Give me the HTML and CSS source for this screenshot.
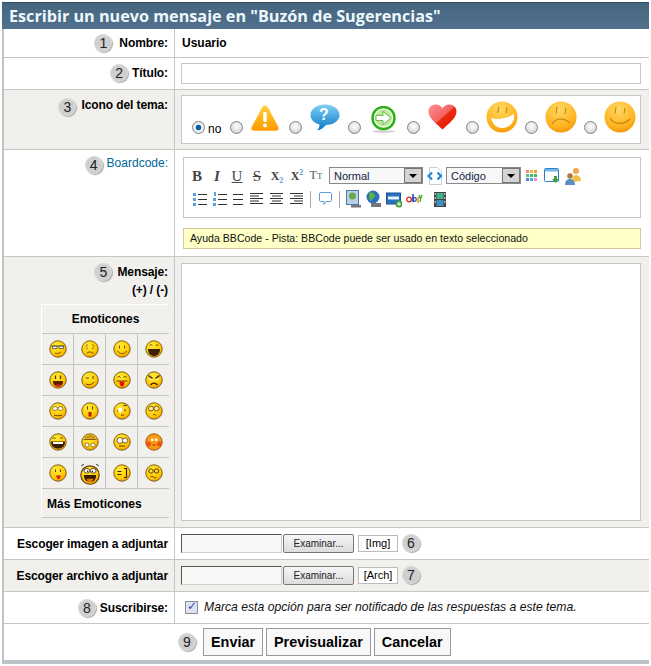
FILE: index.html
```html
<!DOCTYPE html>
<html lang="es">
<head>
<meta charset="utf-8">
<title>Escribir un nuevo mensaje</title>
<link rel="stylesheet" href="styles.css">
</head>
<body>
<svg class="defs" width="0" height="0" aria-hidden="true">
  <defs>
    <radialGradient id="gY" cx="40%" cy="30%" r="75%"><stop offset="0" stop-color="#ffec3a"/><stop offset="0.7" stop-color="#ffc800"/><stop offset="1" stop-color="#e89000"/></radialGradient>
    <radialGradient id="gO" cx="45%" cy="25%" r="85%"><stop offset="0" stop-color="#ffd864"/><stop offset="0.65" stop-color="#ffb420"/><stop offset="1" stop-color="#f08c00"/></radialGradient>
    <linearGradient id="gW" x1="0" y1="0" x2="0" y2="1"><stop offset="0" stop-color="#ffd23a"/><stop offset="1" stop-color="#ff9900"/></linearGradient>
    <linearGradient id="gB" x1="0" y1="0" x2="0" y2="1"><stop offset="0" stop-color="#7fd0f4"/><stop offset="1" stop-color="#0a78c8"/></linearGradient>
    <linearGradient id="gH" x1="0" y1="0" x2="1" y2="1"><stop offset="0" stop-color="#ff8f8f"/><stop offset="0.5" stop-color="#f46060"/><stop offset="0.52" stop-color="#ee2a10"/><stop offset="1" stop-color="#e01000"/></linearGradient>
    <symbol id="f" viewBox="0 0 18 18"><circle cx="9" cy="9" r="8.2" fill="url(#gY)" stroke="#80601a" stroke-width="1"/></symbol>
    <symbol id="b" viewBox="0 0 32 32"><circle cx="16" cy="16" r="15.5" fill="url(#gO)"/></symbol>
  </defs>
</svg>

<form class="post">
  <h2 class="title">Escribir un nuevo mensaje en "Buzón de Sugerencias"</h2>

  <div class="row r1">
    <div class="lab"><span class="num">1</span><b>Nombre:</b></div>
    <div class="val"><b class="user">Usuario</b></div>
  </div>

  <div class="row r2">
    <div class="lab"><span class="num">2</span><b>Título:</b></div>
    <div class="val"><input class="text" type="text"></div>
  </div>

  <div class="row r3 alt">
    <div class="lab"><span class="num">3</span><b>Icono del tema:</b></div>
    <div class="val">
      <div class="icons">
        <label class="opt first"><input class="radio" type="radio" name="i" checked><span class="no">no</span></label>
        <label class="opt"><input class="radio" type="radio" name="i">
          <svg class="ti warn" width="30" height="28" viewBox="0 0 30 28"><path d="M15 1.5c1.500 0 2.500 1 3.300 2.500l10 19c1 2-.3 3.800-2.300 3.800H4C2 26.800.7 25 1.700 23l10-19C12.500 2.500 13.500 1.500 15 1.500z" fill="url(#gW)"/><rect x="13.300" y="8" width="3.400" height="10" rx="1.200" fill="#fff"/><circle cx="15" cy="21.500" r="2" fill="#fff"/></svg></label>
        <label class="opt"><input class="radio" type="radio" name="i">
          <svg class="ti quest" width="30" height="27" viewBox="0 0 30 27"><path d="M15 .5c8 0 14.500 4.500 14.500 10.500S23 21 16 21c-2 2.500-5 5-9 5.500 1.500-1.500 2.500-3.500 2.500-6C4 19 .5 15.500.5 11 .5 5 7 .5 15 .5z" fill="url(#gB)"/><text class="q" x="14" y="16" text-anchor="middle">?</text></svg></label>
        <label class="opt"><input class="radio" type="radio" name="i">
          <svg class="ti go" width="25" height="27" viewBox="0 0 25 27"><ellipse cx="12.500" cy="25.500" rx="11.500" ry="1.200" fill="#ccc"/><circle cx="12.500" cy="12" r="11" fill="#fff" stroke="#2cb014" stroke-width="2.500"/><circle cx="12.500" cy="12" r="8.500" fill="#b8ec90"/><path d="M5 9.500h7V5.500l8 6.500-8 6.500v-4H5z" fill="#fff" stroke="#5aa838" stroke-width=".8"/></svg></label>
        <label class="opt"><input class="radio" type="radio" name="i">
          <svg class="ti heart" width="29" height="26" viewBox="0 0 29 26"><path d="M14.500 25.500C9 20 .5 14.500.5 7.500.5 3.500 3.500.5 7.500.5c3 0 5.500 1.500 7 4 1.500-2.500 4-4 7-4 4 0 7 3 7 7 0 7-8.500 12.500-14 18z" fill="url(#gH)"/></svg></label>
        <label class="opt"><input class="radio" type="radio" name="i">
          <svg class="ti big" width="32" height="32" viewBox="0 0 32 32"><use href="#b"/><path d="M5 17c7 2 15 1 23-4 1 8-4 14-12 14-6 0-9-4-11-10z" fill="#fff"/><path d="M13 6l-1.500 6M21 6l-1 6" stroke="#c98008" stroke-width="1.100"/></svg></label>
        <label class="opt"><input class="radio" type="radio" name="i">
          <svg class="ti big" width="32" height="32" viewBox="0 0 32 32"><use href="#b"/><path d="M12 6l-1 6.500M21 7l-1 6M7 23c4-6 11-7 18-1" fill="none" stroke="#c98008" stroke-width="1.100"/></svg></label>
        <label class="opt"><input class="radio" type="radio" name="i">
          <svg class="ti big" width="32" height="32" viewBox="0 0 32 32"><use href="#b"/><path d="M12 6l-1 6.500M21 7l-1 6M6 17c4 7 14 7 20 1" fill="none" stroke="#c98008" stroke-width="1.100"/></svg></label>
      </div>
    </div>
  </div>

  <div class="row r4">
    <div class="lab"><span class="num">4</span><a class="link" href="#">Boardcode:</a></div>
    <div class="val editor">
      <div class="tools">
        <div class="tbar">
          <span class="g gb">B</span><span class="g gi">I</span><span class="g gu">U</span><span class="g gs">S</span><span class="g gx">X<sub>2</sub></span><span class="g gx">X<sup>2</sup></span><span class="g gt">T<small>T</small></span>
          <span class="sel s1"><span>Normal</span><i class="arrow"></i></span>
          <svg class="ic code" width="16" height="18" viewBox="0 0 16 18"><path d="M2.500.5h8l4 4v13h-12z" fill="#fff" stroke="#ccd"/><path d="M5 5.500L1.500 9 5 12.500M10.500 5.500L14 9l-3.500 3.500" fill="none" stroke="#1e88d8" stroke-width="2.200"/></svg>
          <span class="sel s2"><span>Código</span><i class="arrow"></i></span>
          <svg class="ic pal" width="12" height="12" viewBox="0 0 12 12"><path fill="#f48a70" d="M0 0h3v3H0z"/><path fill="#f4b840" d="M4 0h3v3H4z"/><path fill="#f0a040" d="M8 0h3v3H8z"/><path fill="#70c070" d="M0 4h3v3H0z"/><path fill="#30c080" d="M4 4h3v3H4z"/><path fill="#50b050" d="M8 4h3v3H8z"/><path fill="#5080e0" d="M0 8h3v3H0z"/><path fill="#40b0e0" d="M4 8h3v3H4z"/><path fill="#f090d0" d="M8 8h3v3H8z"/></svg>
          <svg class="ic win" width="16" height="16" viewBox="0 0 16 16"><rect x=".5" y=".5" width="14" height="13" rx="1" fill="#fff" stroke="#2f7fc8"/><path d="M1 1h13v2.500H1z" fill="#7ab4e8"/><path d="M10 8h3v3h2l-3.500 4L8 11h2z" fill="#3fa03a"/></svg>
          <svg class="ic usr" width="18" height="18" viewBox="0 0 18 18"><circle cx="12" cy="4" r="3" fill="#f0a850"/><path d="M8 15c0-5 2-7 4-7s5 2 5 6z" fill="#f2c040"/><circle cx="6" cy="9" r="2.800" fill="#b07840"/><path d="M1 18c0-4 2-6 5-6s5 2 5 6z" fill="#5a90c0"/></svg>
        </div>
        <div class="tbar b2">
          <svg class="ic" width="14" height="14" viewBox="0 0 14 14"><path d="M0 1h3v3H0zM0 6h3v3H0zM0 11h3v3H0z" fill="#5aa0e0"/><path d="M5 2.500h9M5 7.500h9M5 12.500h9" stroke="#333"/></svg>
          <svg class="ic" width="14" height="14" viewBox="0 0 14 14"><path d="M1 0h2v4H1zM0 6h3v3H0zM0 11h3v3H0z" fill="#5aa0e0"/><path d="M5 2.500h9M5 7.500h9M5 12.500h9" stroke="#333"/></svg>
          <svg class="ic l3" width="14" height="14" viewBox="0 0 14 14"><path d="M0 2.500h10M0 7.500h10M0 12.500h10" stroke="#333"/></svg>
          <svg class="ic al" width="13" height="14" viewBox="0 0 13 14"><path d="M0 1.500h13M0 4h9M0 6.500h13M0 9h9M0 11.500h13" stroke="#333"/></svg>
          <svg class="ic al" width="13" height="14" viewBox="0 0 13 14"><path d="M0 1.500h13M2 4h9M0 6.500h13M2 9h9M0 11.500h13" stroke="#333"/></svg>
          <svg class="ic al" width="13" height="14" viewBox="0 0 13 14"><path d="M0 1.500h13M4 4h9M0 6.500h13M4 9h9M0 11.500h13" stroke="#333"/></svg>
          <span class="sep"></span>
          <svg class="ic bub" width="13" height="14" viewBox="0 0 13 14"><path d="M2 .5h9c1 0 1.500.5 1.500 1.500v6c0 1-.5 1.500-1.500 1.500H7l-2 3v-3H2C1 9.500.5 9 .5 8V2C.5 1 1 .5 2 .5z" fill="#fff" stroke="#5a9cd8"/></svg>
          <span class="sep s-b"></span>
          <svg class="ic pic" width="16" height="18" viewBox="0 0 16 18"><rect x=".5" y=".5" width="12" height="14" fill="#b8d0e8" stroke="#4a78a8"/><circle cx="6.500" cy="6" r="3.500" fill="#6aa84a"/><path d="M5 15h10v2.500H5z" fill="#777"/></svg>
          <svg class="ic pic" width="16" height="18" viewBox="0 0 16 18"><circle cx="7" cy="7" r="6.500" fill="#2a70c0"/><path d="M3 3c3-2 5 0 6 2s-2 3-3 5-3 0-3-3z" fill="#5ab040"/><path d="M5 13h10v4H5z" fill="#777"/></svg>
          <svg class="ic pic" width="16" height="18" viewBox="0 0 16 18"><rect x=".5" y="3" width="14" height="11" fill="#2a70c0" stroke="#1a50a0"/><path d="M2 6.500h11v3H2z" fill="#e8f0f8"/><circle cx="13" cy="14" r="3.500" fill="#3fa03a"/><path d="M11 14h4M13 12v4" stroke="#fff"/></svg>
          <svg class="ic pic ebay" width="17" height="12" viewBox="0 0 17 12"><circle cx="3" cy="6.500" r="2.300" fill="none" stroke="#e02020" stroke-width="1.300"/><path d="M7 1v8" stroke="#1a40c0" stroke-width="1.500"/><circle cx="8.500" cy="6.500" r="1.800" fill="none" stroke="#1a40c0" stroke-width="1.200"/><path d="M12 4l0 6" stroke="#e8a000" stroke-width="1.500"/><path d="M13 2l1.500 4L16 2M14.500 6L14 9" fill="none" stroke="#40a020" stroke-width="1.300"/></svg>
          <svg class="ic film" width="12" height="15" viewBox="0 0 12 15"><rect width="12" height="15" fill="#444"/><rect x="2.500" y="1" width="7" height="6" fill="#3fb088"/><rect x="2.500" y="8" width="7" height="6" fill="#3f90c0"/><path d="M.7 1h1v2h-1zM.7 5h1v2h-1zM.7 9h1v2h-1zM10.300 1h1v2h-1zM10.300 5h1v2h-1zM10.300 9h1v2h-1z" fill="#ddd"/></svg>
        </div>
      </div>
      <div class="help">Ayuda BBCode - Pista: BBCode puede ser usado en texto seleccionado</div>
    </div>
  </div>

  <div class="row r5 alt">
    <div class="lab stack">
      <div class="lab-top"><span class="num">5</span><b>Mensaje:</b></div>
      <div class="size"><b>(+) / (-)</b></div>
      <div class="emos">
        <div class="emo-head">Emoticones</div>
        <span class="c"><svg class="e" viewBox="0 0 18 18"><use href="#f"/><path d="M2.500 6h13M3.500 6h4.500v2.500h-4.500zM10 6h4.500v2.500H10z" fill="#fff" stroke="#333" stroke-width=".7"/><path d="M6 13c2 1 4 .5 6-1" fill="none" stroke="#7a5000"/></svg></span>
        <span class="c"><svg class="e" viewBox="0 0 18 18"><use href="#f"/><path d="M6.500 4.500L5 6.500M11.500 4.500L13 6.500M6 7.500v1.500M12 7.500v1.500M5.500 13.500c2-2 5-2 7 0" fill="none" stroke="#7a5000"/></svg></span>
        <span class="c"><svg class="e" viewBox="0 0 18 18"><use href="#f"/><path d="M6.500 5.500v3M11.500 5.500v3M4.500 11c2 3.500 7 3.500 9 0" fill="none" stroke="#7a5000"/></svg></span>
        <span class="c"><svg class="e" viewBox="0 0 18 18"><use href="#f"/><path d="M4.500 5.500c1-1 2-1 3 0M10.500 5.500c1-1 2-1 3 0" fill="none" stroke="#7a5000"/><path d="M3 9h12c0 5-3 7-6 7s-6-2-6-7z" fill="#3a2000"/></svg></span>

        <span class="c"><svg class="e" viewBox="0 0 18 18"><use href="#f"/><path d="M6.500 4.500v3.500M11.500 4.500v3.500" stroke="#5a3a00" stroke-width="1.300"/><path d="M4 10h10c0 4-2 5.500-5 5.500S4 14 4 10z" fill="#5a2000"/><path d="M6.500 13.500h5v2h-5z" fill="#e02020"/></svg></span>
        <span class="c"><svg class="e" viewBox="0 0 18 18"><use href="#f"/><path d="M5 7h3M12 5v3M5 13c3 1.500 6 .5 8-2" fill="none" stroke="#5a3a00"/></svg></span>
        <span class="c"><svg class="e" viewBox="0 0 18 18"><use href="#f"/><path d="M4.500 6.500c1-1.500 2-1.500 3 0M10.500 6.500c1-1.500 2-1.500 3 0M3.500 10h11" fill="none" stroke="#5a3a00"/><path d="M6.500 10.500h5c0 3.500-1 5-2.500 5s-2.500-1.500-2.500-5z" fill="#e81010"/></svg></span>
        <span class="c"><svg class="e" viewBox="0 0 18 18"><use href="#f"/><path d="M3.500 4.500l4 3M14.500 4.500l-4 3" stroke="#3a2000" stroke-width="1.400"/><path d="M4.500 7.500l3 1.500M13.500 7.500l-3 1.500" stroke="#fff"/><path d="M5.500 14c2-2.500 5-2.500 7 0" fill="none" stroke="#3a2000" stroke-width="1.300"/></svg></span>

        <span class="c"><svg class="e" viewBox="0 0 18 18"><use href="#f"/><ellipse cx="6" cy="6.500" rx="2.400" ry="2" fill="#fff" stroke="#5a3a00" stroke-width=".6"/><ellipse cx="11.500" cy="6.500" rx="2.400" ry="2" fill="#fff" stroke="#5a3a00" stroke-width=".6"/><path d="M5 13c2 1 5 1 8 0" fill="none" stroke="#5a3a00"/></svg></span>
        <span class="c"><svg class="e" viewBox="0 0 18 18"><use href="#f"/><path d="M6.500 4.500v3M11.500 4.500v3" stroke="#5a3a00"/><rect x="7.500" y="10" width="3" height="4.500" fill="#c01808"/></svg></span>
        <span class="c"><svg class="e" viewBox="0 0 18 18"><use href="#f"/><path d="M10 4c1-1 3-1 4 0M4 9h3" fill="none" stroke="#5a3a00"/><ellipse cx="7" cy="8" rx="2" ry="2.500" fill="#fff"/><path d="M12 7v2.500M8 13h3" stroke="#5a3a00"/></svg></span>
        <span class="c"><svg class="e" viewBox="0 0 18 18"><use href="#f"/><circle cx="6" cy="6.500" r="2.500" fill="#ffe890" stroke="#5a3a00" stroke-width=".8"/><circle cx="11.500" cy="6.500" r="2.500" fill="#ffe890" stroke="#5a3a00" stroke-width=".8"/><path d="M8 13c1-1 2-1 3 .5" fill="none" stroke="#5a3a00"/></svg></span>

        <span class="c"><svg class="e" viewBox="0 0 18 18"><use href="#f"/><path d="M3.500 5.500c1-1 2-1 3 0M11 5.500c1-1 2-1 3 0" fill="none" stroke="#5a3a00"/><path d="M2 8.500h14c0 5-3 7-7 7s-7-2-7-7z" fill="#3a2000"/><path d="M4 9h10v2H4z" fill="#fff"/></svg></span>
        <span class="c"><svg class="e" viewBox="0 0 18 18"><use href="#f"/><path d="M4 5c3-3 7-3 10 0z" fill="#e8b020" stroke="#8a5a10" stroke-width=".7"/><path d="M2.500 6.500h13" stroke="#8a5a10"/><circle cx="6" cy="12" r="2" fill="#fff" stroke="#5a3a00" stroke-width=".6"/><circle cx="12" cy="12" r="2" fill="#fff" stroke="#5a3a00" stroke-width=".6"/></svg></span>
        <span class="c"><svg class="e" viewBox="0 0 18 18"><use href="#f"/><circle cx="7" cy="7.500" r="3" fill="#fff" stroke="#5a3a00" stroke-width=".8"/><circle cx="12" cy="7.500" r="2.600" fill="#fff" stroke="#5a3a00" stroke-width=".8"/><path d="M6 13h6" stroke="#5a3a00"/></svg></span>
        <span class="c"><svg class="e" viewBox="0 0 18 18"><circle cx="9" cy="9" r="8.200" fill="#fa9a10" stroke="#a05a10"/><circle cx="3.500" cy="11" r="2.500" fill="#f0501a"/><circle cx="14.500" cy="11" r="2.500" fill="#f0501a"/><path d="M6 5.500h2.500v2.500H6zM10 5.500h2.500v2.500H10z" fill="#fff"/><path d="M7.500 12h3" stroke="#7a3a00"/></svg></span>

        <span class="c"><svg class="e" viewBox="0 0 18 18"><use href="#f"/><path d="M6.500 5.500v2.500M11.500 5.500v2.500" stroke="#5a3a00"/><circle cx="8.500" cy="12.500" r="1.200" fill="#e01020"/><circle cx="10.500" cy="12.500" r="1.200" fill="#e01020"/><circle cx="9.500" cy="14" r="1.200" fill="#e01020"/></svg></span>
        <span class="c"><svg class="e crazy" viewBox="0 0 26 30"><circle cx="13" cy="17" r="12" fill="url(#gY)" stroke="#5a4010" stroke-width="1.500"/><path d="M5 3L1.500 5M21 3l3.500 2" fill="none" stroke="#3a2000" stroke-width="1.200"/><ellipse cx="9" cy="11.500" rx="3.800" ry="3" fill="#fff" stroke="#3a2000"/><ellipse cx="17" cy="11.500" rx="3.800" ry="3" fill="#fff" stroke="#3a2000"/><circle cx="10" cy="12" r="1" fill="#000"/><circle cx="16" cy="12" r="1" fill="#000"/><path d="M5 17h16c0 6-3 9-8 9s-8-3-8-9z" fill="#3a2000"/><path d="M8.500 22h9c-1 3-2.500 4-4.500 4s-3.500-1-4.500-4z" fill="#e87a00"/></svg></span>
        <span class="c"><svg class="e" viewBox="0 0 18 18"><use href="#f"/><path d="M4.500 7.500h4M4.500 10.500h4M11 4.500h2.500v9H11" fill="none" stroke="#3a2000" stroke-width="1.100"/></svg></span>
        <span class="c"><svg class="e" viewBox="0 0 18 18"><use href="#f"/><circle cx="6" cy="7" r="2.200" fill="none" stroke="#5a3a00"/><circle cx="11.500" cy="7" r="2.200" fill="none" stroke="#5a3a00"/><path d="M5.500 13c1-1 2-1 3 0s2 1 3 0" fill="none" stroke="#5a3a00"/></svg></span>
        <a class="emo-more" href="#">Más Emoticones</a>
      </div>
    </div>
    <div class="val"><textarea class="msg"></textarea></div>
  </div>

  <div class="row r6">
    <div class="lab"><b>Escoger imagen a adjuntar</b></div>
    <div class="val file">
      <span class="fbox"></span><button class="browse" type="button">Examinar...</button><span class="tag">[Img]</span><span class="num">6</span>
    </div>
  </div>

  <div class="row r6 alt">
    <div class="lab"><b>Escoger archivo a adjuntar</b></div>
    <div class="val file">
      <span class="fbox"></span><button class="browse" type="button">Examinar...</button><span class="tag">[Arch]</span><span class="num">7</span>
    </div>
  </div>

  <div class="row r6 r8">
    <div class="lab"><span class="num">8</span><b>Suscribirse:</b></div>
    <div class="val sub">
      <input class="check" type="checkbox" checked>
      <em>Marca esta opción para ser notificado de las respuestas a este tema.</em>
    </div>
  </div>

  <div class="actions">
    <span class="num">9</span>
    <button class="btn" type="button">Enviar</button>
    <button class="btn" type="button">Previsualizar</button>
    <button class="btn" type="button">Cancelar</button>
  </div>
</form>
</body>
</html>
```

FILE: styles.css
```css
* { box-sizing: border-box; }
html, body { margin: 0; padding: 0; background: #fff; }
body { font: 12px "Liberation Sans", Arial, sans-serif; color: #000; height: 666px; overflow: hidden; }
.defs { position: absolute; }

.post { margin: 2px 2px 0 2px; width: 647px; border-left: 2px solid #c0c4c6; border-bottom: 4px solid #bcc3c6; }

.title {
  margin: 0 0 0 -2px; height: 27px; width: 647px;
  padding: 0 0 0 7px;
  font: bold 16.2px/26px "Open Sans", Verdana, sans-serif;
  color: #eef8fc;
  background: linear-gradient(#466680, #50708c);
  border-top: 1px solid #2f4f68;
  white-space: nowrap;
}

.row { display: grid; grid-template-columns: 171px 1fr; border-bottom: 1px solid #c6c6c6; }
.alt { background: #f1f0ed; }
.r1 { height: 29px; }
.r2 { height: 32px; }
.r3 { height: 60px; }
.r4 { height: 107px; }
.r5 { height: 271px; }
.r6 { height: 32px; }

.lab { display: flex; align-items: center; justify-content: flex-end; gap: 5px; padding-right: 6px; border-right: 1px solid #c6c6c6; height: 100%; white-space: nowrap; }
.lab b { color: #000; letter-spacing: -.1px; }
.r1 .lab { gap: 7px; }
.r2 .lab, .r4 .lab, .r8 .lab { gap: 4px; }
.r2 .lab { padding-bottom: 2px; }
.r3 .lab { align-items: flex-start; padding-top: 8px; }
.r4 .lab { align-items: flex-start; padding-top: 6px; }

.num { flex: none; width: 18px; height: 18px; border-radius: 50%; background: #cfcfcf; color: #222; font-size: 14px; line-height: 18px; text-align: center; box-shadow: 1px 1px 1px #a8a8a8, inset 0 0 2px #eee; }

.val { padding-left: 6px; padding-right: 7px; min-width: 0; }
.r1 .val { display: flex; align-items: center; padding-left: 7px; }
.user { font-weight: bold; }

.text { display: block; margin-top: 5px; width: 460px; height: 21px; padding: 0 3px; border: 1px solid #c6c6c6; background: #fff; outline: 0; }

.r3 .val { padding-top: 5px; }
.icons { display: flex; align-items: flex-end; width: 460px; height: 49px; border: 1px solid #c6c6c6; background: #fff; padding: 0 0 9px 10px; }
.opt { display: flex; align-items: flex-end; width: 59px; flex: none; height: 32px; }
.first { width: 38px; gap: 3px; }
.radio { appearance: none; -webkit-appearance: none; margin: 0; flex: none; width: 13px; height: 13px; border-radius: 50%; border: 1px solid #7f8488; background: radial-gradient(circle at 50% 40%, #fff, #dcdcdc 65%, #bbb); }
.radio:checked { background: radial-gradient(circle, #0a5a9c 0, #0a6cb0 33%, #fff 42%, #d8d8d8 80%); }
.no { font-size: 12px; line-height: 12px; position: relative; top: 1px; }
.ti { flex: none; margin-left: 7px; }
.warn { margin-bottom: 2px; }
.quest { margin-left: 8px; margin-bottom: 3px; }
.go { margin-left: 10px; margin-bottom: 1px; }
.heart { margin-left: 8px; margin-bottom: 4px; }
.big { margin-bottom: 1px; }
.q { font: bold 16px "Liberation Sans", sans-serif; fill: #fff; }

.editor { padding-left: 8px; padding-top: 7px; padding-right: 8px; }
.tools { height: 61px; border: 1px solid #c6c6c6; background: #fff; padding: 9px 0 0 3px; }
.tbar { display: flex; align-items: center; height: 17px; }
.b2 { margin-top: 6px; height: 18px; padding-left: 6px; }
.g { font: bold 15px/16px "Liberation Serif", serif; color: #444; width: 20px; text-align: center; flex: none; }
.gi { font-style: italic; }
.gu { text-decoration: underline; font-weight: normal; }
.gs { text-decoration: line-through; font-weight: normal; }
.gx { font-size: 12px; }
.gx sub, .gx sup { font-size: 8px; color: #5a9cd8; line-height: 0; }
.gt { font-weight: normal; font-size: 12px; width: 18px; color: #555; }
.gt small { font-size: 9px; }
.sel { display: flex; align-items: center; justify-content: space-between; flex: none; height: 17px; border: 1px solid #8a8a8a; background: #f8f8f8; font-size: 11px; color: #124; padding-left: 4px; margin-left: 4px; }
.s1 { width: 94px; }
.s2 { width: 75px; margin-left: 3px; }
.arrow { width: 18px; height: 15px; flex: none; background: #d4d4d4; border: 1px solid #777; position: relative; }
.arrow::after { content: ""; position: absolute; left: 4px; top: 5px; border: 4px solid transparent; border-top: 4px solid #000; border-bottom: 0; }
.ic { flex: none; display: block; }
.code { margin-left: 4px; }
.pal { margin-left: 5px; }
.win { margin-left: 6px; }
.usr { margin-left: 4px; }
.b2 .ic { margin-right: 6px; }
.b2 .l3 { margin-right: 3px; }
.b2 .al { margin-right: 7px; }
.sep { width: 1px; height: 17px; background: #aaa; margin: 0 8px 0 0; flex: none; }
.s-b { margin-right: 6px; }
.b2 .bub { margin-right: 7px; }
.b2 .pic { margin-right: 4px; }
.b2 .ebay { margin-right: 11px; }
.help { margin-top: 10px; height: 21px; line-height: 19px; padding-left: 6px; background: #ffffc8; border: 1px solid #d6c6a0; font-size: 10.6px; color: #111; white-space: nowrap; overflow: hidden; }

.link { color: #006699; text-decoration: none; font-size: 12px; }

.stack { display: block; padding-top: 7px; padding-right: 0; }
.lab-top { display: flex; justify-content: flex-end; align-items: center; gap: 5px; padding-right: 6px; height: 16px; }
.size { text-align: right; padding-right: 6px; margin-top: 2px; line-height: 16px; }
.emos { display: grid; grid-template-columns: repeat(4, 31px); gap: 1px; margin: 6px 0 0 37px; width: 128px; background: #c0c6ca; border-top: 1px solid #fff; border-left: 1px solid #fff; border-right: 1px solid #c0c6ca; border-bottom: 1px solid #c0c6ca; }
.emo-head { grid-column: 1 / -1; height: 28px; line-height: 28px; text-align: center; font-weight: bold; background: #f1f0ed; letter-spacing: -.05px; }
.c { display: flex; align-items: center; justify-content: center; height: 30px; background: #f1f0ed; }
.e { width: 18px; height: 18px; display: block; }
.crazy { width: 20px; height: 23px; }
.emo-more { grid-column: 1 / -1; height: 28px; line-height: 30px; padding-left: 5px; background: #f1f0ed; color: #000; font-weight: bold; text-decoration: none; }

.r5 .val { padding-top: 6px; }
.msg { display: block; width: 460px; height: 258px; border: 1px solid #c6c6c6; background: #fff; resize: none; outline: 0; margin: 0; }

.file { display: flex; align-items: center; padding-bottom: 1px; }
.fbox { flex: none; width: 101px; height: 19px; border: 1px solid #cfcfcf; border-top-color: #555; border-left-color: #555; background: #f8f8f6; }
.browse { flex: none; width: 71px; height: 19px; margin: 0 0 0 1px; padding: 0; border: 1px solid #777; border-radius: 2px; background: linear-gradient(#f6f6f6, #dcdcdc); font: 10px "Liberation Sans", sans-serif; color: #222; }
.tag { flex: none; width: 40px; height: 17px; margin-left: 4px; line-height: 15px; text-align: center; border: 1px solid #bbb; background: #fff; font-size: 11px; }
.file .num { margin-left: 4px; }

.sub { display: flex; align-items: center; gap: 6px; padding-left: 10px; padding-bottom: 1px; }
.check { appearance: none; -webkit-appearance: none; position: relative; margin: 0; width: 13px; height: 13px; flex: none; border: 1px solid #8a8ea0; background: #dfe2ee; }
.check:checked::after { content: "✓"; position: absolute; left: 1px; top: -3px; font: bold 12px "DejaVu Sans", sans-serif; color: #2a4aa8; }
.sub em { font-size: 12.2px; color: #111; white-space: nowrap; }

.actions { display: flex; align-items: center; justify-content: flex-start; height: 36px; padding: 0 0 1px 174px; gap: 3px; }
.actions .num { margin-right: 4px; }
.btn { height: 28px; padding: 0 7px; border: 1px solid #999; background: #f8f8f8; font: bold 14.4px "Liberation Sans", sans-serif; color: #000; }
```
